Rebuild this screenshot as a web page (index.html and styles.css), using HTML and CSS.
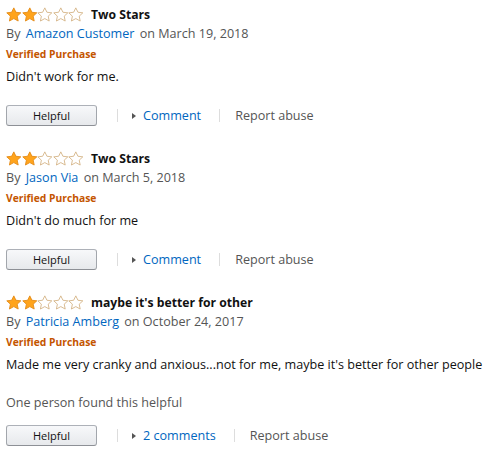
FILE: index.html
```html
<!DOCTYPE html>
<html>
<head>
<meta charset="utf-8">
<link rel="stylesheet" href="styles.css">
</head>
<body>
<svg width="0" height="0" class="defs">
  <defs>
    <symbol id="sf" viewBox="0 0 16 15">
      <path d="M8 0.7 L10.2 5.2 L15.2 5.8 L11.5 9.2 L12.5 14.2 L8 11.7 L3.5 14.2 L4.5 9.2 L0.8 5.8 L5.8 5.2 Z" fill="#ffa41c" stroke="#e38a16" stroke-width="0.9" stroke-linejoin="round"/>
    </symbol>
    <symbol id="se" viewBox="0 0 16 15">
      <path d="M8 0.7 L10.2 5.2 L15.2 5.8 L11.5 9.2 L12.5 14.2 L8 11.7 L3.5 14.2 L4.5 9.2 L0.8 5.8 L5.8 5.2 Z" fill="#fff" stroke="#d4b283" stroke-width="0.9" stroke-linejoin="round"/>
    </symbol>
  </defs>
</svg>

<div class="review">
  <div class="head">
    <span class="stars"><svg><use href="#sf"/></svg><svg><use href="#sf"/></svg><svg><use href="#se"/></svg><svg><use href="#se"/></svg><svg><use href="#se"/></svg></span>
    <span class="title">Two Stars</span>
  </div>
  <div class="byline">By <a class="link">Amazon Customer</a> on March 19, 2018</div>
  <div class="verified">Verified Purchase</div>
  <div class="body">Didn't work for me.</div>
  <div class="actions">
    <button class="btn">Helpful</button>
    <span class="sep"></span>
    <span class="tri"></span><a class="link">Comment</a>
    <span class="sep sep2"></span>
    <span class="report">Report abuse</span>
  </div>
</div>

<div class="review">
  <div class="head">
    <span class="stars"><svg><use href="#sf"/></svg><svg><use href="#sf"/></svg><svg><use href="#se"/></svg><svg><use href="#se"/></svg><svg><use href="#se"/></svg></span>
    <span class="title">Two Stars</span>
  </div>
  <div class="byline">By <a class="link">Jason Via</a> on March 5, 2018</div>
  <div class="verified">Verified Purchase</div>
  <div class="body">Didn't do much for me</div>
  <div class="actions">
    <button class="btn">Helpful</button>
    <span class="sep"></span>
    <span class="tri"></span><a class="link">Comment</a>
    <span class="sep sep2"></span>
    <span class="report">Report abuse</span>
  </div>
</div>

<div class="review">
  <div class="head">
    <span class="stars"><svg><use href="#sf"/></svg><svg><use href="#sf"/></svg><svg><use href="#se"/></svg><svg><use href="#se"/></svg><svg><use href="#se"/></svg></span>
    <span class="title">maybe it's better for other</span>
  </div>
  <div class="byline">By <a class="link">Patricia Amberg</a> on October 24, 2017</div>
  <div class="verified">Verified Purchase</div>
  <div class="body">Made me very cranky and anxious...not for me, maybe it's better for other people</div>
  <div class="count">One person found this helpful</div>
  <div class="actions actions-count">
    <button class="btn">Helpful</button>
    <span class="sep"></span>
    <span class="tri"></span><a class="link">2 comments</a>
    <span class="sep sep2"></span>
    <span class="report">Report abuse</span>
  </div>
</div>
</body>
</html>
```
FILE: styles.css
```css
html, body { margin: 0; padding: 0; background: #fff; }
body {
  padding: 4.5px 6px 0 6px;
  font-family: "Open Sans", "Noto Sans", Arial, sans-serif;
  font-size: 12.6px;
  line-height: 19px;
  color: #111;
}
.defs { position: absolute; width: 0; height: 0; }
.review { margin-bottom: 22.5px; }
.head { display: flex; align-items: center; height: 19px; }
.stars { display: flex; margin-right: 7px; }
.stars svg { width: 15.6px; height: 15px; display: block; }
.title { font-weight: 700; color: #111; font-size: 12.2px; }
.byline { color: #555; line-height: 20px; }
.link { color: #0066c0; text-decoration: none; }
.byline .link { margin: 0 2px; }
.verified { color: #c45500; font-weight: 700; font-size: 10.3px; line-height: 20px; }
.body { margin-top: 3px; }
.count { margin-top: 19px; color: #555; }
.actions { display: flex; align-items: center; margin-top: 19.5px; height: 21px; }
.actions-count { margin-top: 13.5px; }
.btn {
  width: 91px; height: 21px;
  box-sizing: border-box;
  border: 1px solid;
  border-color: #adb1b8 #a2a6ac #8d9096;
  border-radius: 3px;
  background: linear-gradient(to bottom, #f7f8fa, #e7e9ec);
  font-family: inherit; font-size: 11px; color: #111;
  padding: 0; margin: 0;
}
.sep { width: 1px; height: 13px; background: #ddd; margin: 0 14px 0 20px; }
.sep2 { margin: 0 15px 0 18px; }
.tri {
  width: 0; height: 0;
  border-top: 3px solid transparent; border-bottom: 3px solid transparent;
  border-left: 4px solid #555;
  margin-right: 7px;
}
.report { color: #555; }
```
